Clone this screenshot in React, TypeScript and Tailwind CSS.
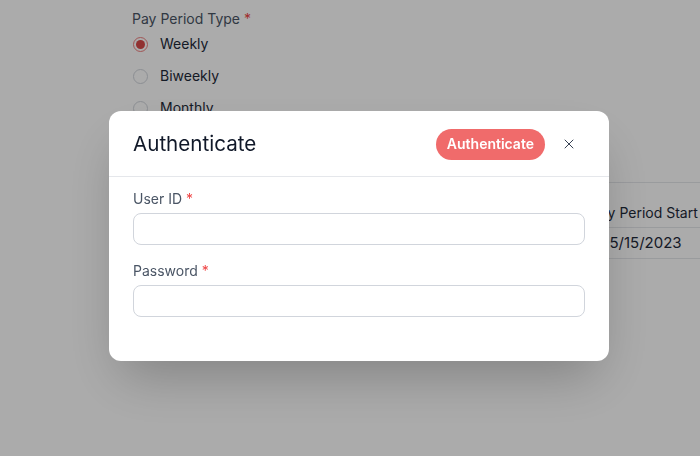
import { X } from 'lucide-react'

const periods = [
  { label: 'Weekly', checked: true },
  { label: 'Biweekly', checked: false },
  { label: 'Monthly', checked: false },
]

function Radio({ checked }: { checked: boolean }) {
  return checked ? (
    <span className="flex size-[15px] items-center justify-center rounded-full border border-[#f08080] bg-white">
      <span className="size-[9px] rounded-full bg-[#d94a4a]" />
    </span>
  ) : (
    <span className="size-[15px] rounded-full border border-gray-300 bg-white" />
  )
}

function Field({ label, type = 'text' }: { label: string; type?: string }) {
  return (
    <div className="flex flex-col gap-1">
      <label className="text-sm leading-5 text-gray-600">
        {label} <span className="text-[#ef4444]">*</span>
      </label>
      <input
        type={type}
        className="h-8 w-full rounded-lg border border-gray-300 bg-white px-2 text-sm outline-none"
      />
    </div>
  )
}

export default function App() {
  return (
    <div className="relative h-[456px] w-[700px] overflow-hidden bg-white font-['Inter',sans-serif] text-gray-800">
      {/* page behind the dialog */}
      <div className="flex flex-col pl-[132px] pt-[9px]">
        <div className="text-sm leading-5 text-gray-600">
          Pay Period Type <span className="text-[#ef4444]">*</span>
        </div>
        <div className="mt-[5px] flex flex-col gap-3">
          {periods.map((p) => (
            <div key={p.label} className="flex h-5 items-center gap-3 pl-px">
              <Radio checked={p.checked} />
              <span className="text-sm text-gray-800">{p.label}</span>
            </div>
          ))}
        </div>
      </div>
      <div className="ml-[460px] mt-[64px] flex flex-col border-t border-gray-200 text-sm text-gray-800">
        <div className="flex h-[45px] items-end border-b border-gray-200 pb-[4px] pl-[131px] whitespace-nowrap">
          Pay Period Start
        </div>
        <div className="flex h-[31px] items-center border-b border-gray-200 pl-[140px] text-[15px]">
          05/15/2023
        </div>
      </div>

      {/* overlay */}
      <div className="fixed inset-0 bg-black/[0.33]" />

      {/* dialog */}
      <div className="fixed left-[109px] top-[111px] w-[500px] rounded-xl bg-white shadow-2xl">
        <div className="flex items-center justify-between border-b border-gray-200 px-6 pb-4 pt-[17px]">
          <h2 className="text-[20.6px] font-normal leading-7 text-gray-900">Authenticate</h2>
          <div className="flex items-center gap-2">
            <button
              type="button"
              className="h-[31px] rounded-full bg-[#f06b6b] px-[11px] text-sm font-semibold text-white"
            >
              Authenticate
            </button>
            <button type="button" className="flex size-8 items-center justify-center rounded text-gray-700">
              <X className="size-4" strokeWidth={1.5} />
            </button>
          </div>
        </div>
        <div className="flex flex-col gap-4 px-6 pb-11 pt-3">
          <Field label="User ID" />
          <Field label="Password" type="password" />
        </div>
      </div>
    </div>
  )
}
